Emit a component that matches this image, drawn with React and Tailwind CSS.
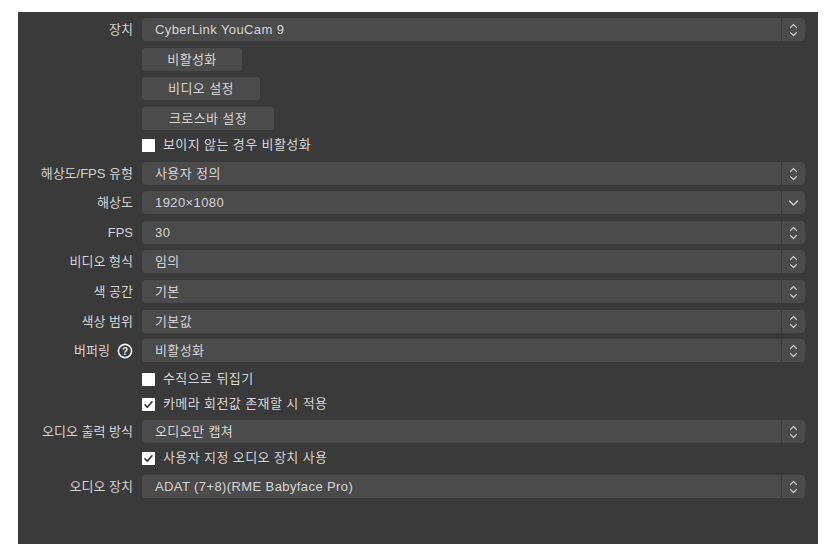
import React from "react";

const font = "font-['Liberation_Sans','Noto_Sans_CJK_KR',sans-serif]";

function UpDown() {
  return (
    <svg width="9" height="14" viewBox="0 0 9 14" fill="none" stroke="#c8c8c8" strokeWidth="1.2" strokeLinecap="round" strokeLinejoin="round">
      <path d="M1.5 4.5 L4.5 1.5 L7.5 4.5" />
      <path d="M1.5 9.5 L4.5 12.5 L7.5 9.5" />
    </svg>
  );
}

function Down() {
  return (
    <svg width="11" height="8" viewBox="0 0 11 8" fill="none" stroke="#d0d0d0" strokeWidth="1.4" strokeLinecap="round" strokeLinejoin="round">
      <path d="M1.5 2 L5.5 6 L9.5 2" />
    </svg>
  );
}

function Combo({ value, single, mt }) {
  return (
    <div className={`flex h-[23px] rounded-[4px] bg-[#4b4b4b] ${mt}`}>
      <div className="flex flex-1 items-center pl-[13px] text-[13px] tracking-[0.4px] text-[#d6d6d6]">{value}</div>
      <div className="w-[1px] bg-[#3c3c3c]" />
      <div className="flex w-[23px] items-center justify-center">{single ? <Down /> : <UpDown />}</div>
    </div>
  );
}

function Row({ label, children, mt = "", help }) {
  return (
    <div className={`grid grid-cols-[115px_1fr] gap-x-[9px] ${mt}`}>
      <div className="flex items-center justify-end gap-[7px] text-[13px] text-[#d4d4d4]">
        <span>{label}</span>
        {help && (
          <svg width="16" height="16" viewBox="0 0 16 16">
            <circle cx="8" cy="8" r="6.6" fill="none" stroke="#f0f0f0" strokeWidth="1.6" />
            <text x="8" y="11.6" textAnchor="middle" fontSize="10" fontWeight="bold" fill="#f0f0f0" fontFamily="Liberation Sans, sans-serif">?</text>
          </svg>
        )}
      </div>
      <div>{children}</div>
    </div>
  );
}

function Button({ children, w, mt }) {
  return (
    <div className={`grid grid-cols-[115px_1fr] gap-x-[9px] ${mt}`}>
      <div />
      <div className={`flex h-[23px] ${w} items-center justify-center rounded-[3px] bg-[#4b4b4b] text-[13px] tracking-[0.4px] text-[#d6d6d6]`}>
        {children}
      </div>
    </div>
  );
}

function Check({ children, checked, mt }) {
  return (
    <div className={`grid h-[20px] grid-cols-[115px_1fr] gap-x-[9px] ${mt}`}>
      <div />
      <div className="flex items-center gap-[8px] text-[13px] tracking-[0.4px] text-[#d6d6d6]">
        <div className="flex h-[13px] w-[13px] items-center justify-center bg-white">
          {checked && (
            <svg width="11" height="11" viewBox="0 0 11 11" fill="none" stroke="#2a2a2a" strokeWidth="1.6" strokeLinecap="round" strokeLinejoin="round">
              <path d="M2 5.8 L4.3 8.2 L9 2.8" />
            </svg>
          )}
        </div>
        <span>{children}</span>
      </div>
    </div>
  );
}

export default function App() {
  return (
    <div className={`h-[555px] w-[835px] bg-white pl-[18px] pt-[12px] ${font}`}>
      <div className="flex h-[532px] w-[800px] flex-col bg-[#3a3a3a] pr-[13px] pt-[6px]">
        <Row label="장치">
          <Combo value="CyberLink YouCam 9" />
        </Row>
        <Button w="w-[100px]" mt="mt-[7px]">비활성화</Button>
        <Button w="w-[118px]" mt="mt-[6px]">비디오 설정</Button>
        <Button w="w-[132px]" mt="mt-[7px]">크로스바 설정</Button>
        <Check mt="mt-[5px]">보이지 않는 경우 비활성화</Check>
        <Row label="해상도/FPS 유형" mt="mt-[7px]">
          <Combo value="사용자 정의" />
        </Row>
        <Row label="해상도" mt="mt-[6px]">
          <Combo value="1920×1080" single />
        </Row>
        <Row label="FPS" mt="mt-[7px]">
          <Combo value="30" />
        </Row>
        <Row label="비디오 형식" mt="mt-[6px]">
          <Combo value="임의" />
        </Row>
        <Row label="색 공간" mt="mt-[7px]">
          <Combo value="기본" />
        </Row>
        <Row label="색상 범위" mt="mt-[7px]">
          <Combo value="기본값" />
        </Row>
        <Row label="버퍼링" mt="mt-[6px]" help>
          <Combo value="비활성화" />
        </Row>
        <Check mt="mt-[7px]">수직으로 뒤집기</Check>
        <Check checked mt="mt-[5px]">카메라 회전값 존재할 시 적용</Check>
        <Row label="오디오 출력 방식" mt="mt-[6px]">
          <Combo value="오디오만 캡쳐" />
        </Row>
        <Check checked mt="mt-[5px]">사용자 지정 오디오 장치 사용</Check>
        <Row label="오디오 장치" mt="mt-[7px]">
          <Combo value="ADAT (7+8)(RME Babyface Pro)" />
        </Row>
      </div>
    </div>
  );
}
